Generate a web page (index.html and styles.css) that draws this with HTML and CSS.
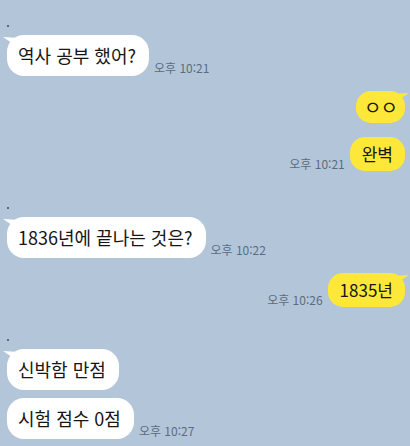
FILE: index.html
```html
<!DOCTYPE html>
<html lang="ko">
<head>
<meta charset="utf-8">
<link rel="stylesheet" href="styles.css">
</head>
<body>
<div class="chat">
  <div class="group left g1">
    <div class="dot"></div>
    <div class="row">
      <div class="bubble white tail">역사 공부 했어?</div>
      <span class="time">오후 10:21</span>
    </div>
  </div>
  <div class="group right g2">
    <div class="row">
      <div class="bubble yellow tail jamo">ㅇㅇ</div>
    </div>
    <div class="row second">
      <span class="time">오후 10:21</span>
      <div class="bubble yellow">완벽</div>
    </div>
  </div>
  <div class="group left g3">
    <div class="dot"></div>
    <div class="row">
      <div class="bubble white tail">1836년에 끝나는 것은?</div>
      <span class="time">오후 10:22</span>
    </div>
  </div>
  <div class="group right g4">
    <div class="row">
      <span class="time">오후 10:26</span>
      <div class="bubble yellow tail">1835년</div>
    </div>
  </div>
  <div class="group left g5">
    <div class="dot"></div>
    <div class="row">
      <div class="bubble white tail">신박함 만점</div>
    </div>
    <div class="row second">
      <div class="bubble white">시험 점수 0점</div>
      <span class="time">오후 10:27</span>
    </div>
  </div>
</div>
</body>
</html>
```

FILE: styles.css
```css
html, body {
  margin: 0;
  padding: 0;
  background: #b3c6d9;
  height: 100%;
}
body {
  font-family: "Noto Sans CJK KR", "Noto Sans", sans-serif;
  color: #161616;
  overflow: hidden;
}
.chat {
  display: flex;
  flex-direction: column;
}
.group {
  display: flex;
  flex-direction: column;
}
.group.left {
  padding-left: 7px;
  align-items: flex-start;
}
.group.right {
  padding-right: 5px;
  align-items: flex-end;
}
.dot {
  width: 2px;
  height: 2px;
  background: #3b4a5a;
  border-radius: 1px;
  margin-bottom: 8px;
}
.row {
  display: flex;
  align-items: flex-end;
  gap: 5px;
}
.row.second {
  margin-top: 8px;
}
.group.right .row.second {
  margin-top: 14px;
}
.bubble {
  position: relative;
  border-radius: 17px;
  white-space: nowrap;
}
.bubble.white {
  background: #ffffff;
  font-size: 18px;
  letter-spacing: 0;
  line-height: 23px;
  padding: 9px 13px 9px 11px;
}
.bubble.yellow {
  background: #fde83a;
  font-size: 17px;
  line-height: 22px;
  padding: 6px 12px;
  border-radius: 15px;
}
.bubble.yellow.jamo {
  font-size: 19px;
  line-height: 22px;
  padding: 5px 8px;
  letter-spacing: -1px;
}
.bubble.white.tail::before {
  content: "";
  position: absolute;
  left: -4px;
  top: 2px;
  width: 12px;
  height: 8px;
  background: #ffffff;
  clip-path: polygon(0 0, 100% 10%, 100% 100%);
}
.bubble.yellow.tail::after {
  content: "";
  position: absolute;
  right: -4px;
  top: 2px;
  width: 12px;
  height: 8px;
  background: #fde83a;
  clip-path: polygon(100% 0, 0 10%, 0 100%);
}
.time {
  font-size: 12px;
  color: #5a6c80;
  line-height: 14px;
  margin-bottom: 1px;
  white-space: nowrap;
}
.group.right .time {
  margin-bottom: 0;
}
.g1 { margin-top: 25px; }
.g2 { margin-top: 15px; }
.g3 { margin-top: 36px; }
.g4 { margin-top: 15px; }
.g5 { margin-top: 32px; }
```
